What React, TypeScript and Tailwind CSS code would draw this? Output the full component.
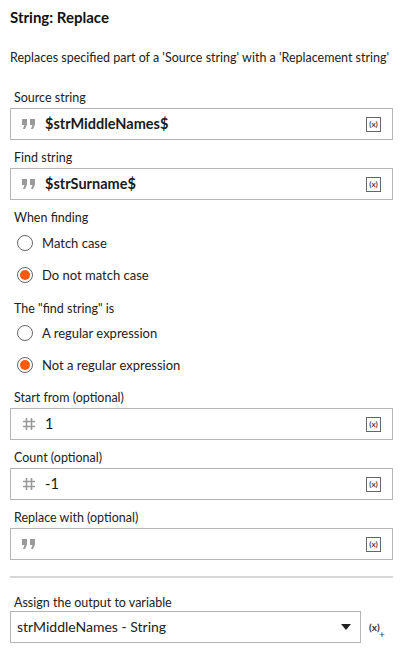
import React from 'react'

const font = { fontFamily: 'Lato, "Noto Sans", sans-serif' }

function QuoteIcon() {
  return (
    <svg width="14" height="10" viewBox="0 0 14 10" className="shrink-0">
      <path d="M0 0h5v5.5L3 10H1l1.5-4H0z M8 0h5v5.5L11 10H9l1.5-4H8z" fill="#9a9a9a" />
    </svg>
  )
}

function HashIcon() {
  return (
    <svg width="14" height="14" viewBox="0 0 14 14" className="shrink-0">
      <path d="M4.5 1v12M9.5 1v12M1 4.5h12M1 9.5h12" stroke="#9a9a9a" strokeWidth="1.6" fill="none" />
    </svg>
  )
}

function VarIcon() {
  return (
    <span className="flex h-[15px] w-[15px] items-center justify-center border border-[#666] text-[8px] font-bold leading-none text-[#444]">
      (x)
    </span>
  )
}

function Label({ children, className = '' }: { children: React.ReactNode; className?: string }) {
  return <div className={`px-1 text-[12.5px] leading-[14px] text-[#222] ${className}`}>{children}</div>
}

function Field({ label, icon, value, bold }: { label: string; icon: 'quote' | 'hash'; value?: string; bold?: boolean }) {
  return (
    <div className="flex flex-col">
      <Label className="pb-[3px]">{label}</Label>
      <div className="flex h-[32px] items-center border border-[#b5b5b5] pl-[11px] pr-[11px]">
        {icon === 'quote' ? <QuoteIcon /> : <HashIcon />}
        <span className={`ml-[9px] flex-1 text-[14.5px] leading-[18px] text-[#1a1a1a] ${bold ? 'font-bold' : ''}`}>{value}</span>
        <VarIcon />
      </div>
    </div>
  )
}

function Radio({ label, checked }: { label: string; checked?: boolean }) {
  return (
    <div className="flex h-[32px] items-center pl-[7px]">
      <span className="flex h-[16px] w-[16px] items-center justify-center rounded-full border border-[#666] bg-white">
        {checked && <span className="h-[10px] w-[10px] rounded-full bg-[#ff5a0a]" />}
      </span>
      <span className="ml-[9px] text-[13px] leading-[16px] text-[#222]">{label}</span>
    </div>
  )
}

export default function App() {
  return (
    <div className="min-h-screen w-[409px] bg-white px-[10px] pt-[8px]" style={font}>
      <h1 className="text-[15px] font-bold leading-[18px] text-[#111]">String: Replace</h1>
      <p className="mt-[24px] text-[12.5px] leading-[16px] text-[#222]">
        Replaces specified part of a 'Source string' with a 'Replacement string'
      </p>

      <div className="mt-[25px] flex w-[383px] flex-col gap-[11px]">
        <Field label="Source string" icon="quote" value="$strMiddleNames$" bold />
        <Field label="Find string" icon="quote" value="$strSurname$" bold />
      </div>

      <div className="mt-[11px] w-[383px]">
        <Label className="pb-[2px]">When finding</Label>
        <Radio label="Match case" />
        <Radio label="Do not match case" checked />
      </div>

      <div className="mt-[11px] w-[383px]">
        <Label className="pb-[1px]">The "find string" is</Label>
        <Radio label="A regular expression" />
        <Radio label="Not a regular expression" checked />
      </div>

      <div className="mt-[10px] flex w-[383px] flex-col gap-[11px]">
        <Field label="Start from (optional)" icon="hash" value="1" />
        <Field label="Count (optional)" icon="hash" value="-1" />
        <Field label="Replace with (optional)" icon="quote" />
      </div>

      <div className="mt-[16px] h-[2px] w-[383px] bg-[#d6d6d6]" />

      <div className="mt-[18px] flex flex-col">
        <Label className="pb-[1px]">Assign the output to variable</Label>
        <div className="flex items-center">
          <div className="flex h-[32px] w-[351px] items-center border border-[#b5b5b5] pl-[6px] pr-[9px]">
            <span className="flex-1 text-[14px] leading-[18px] text-[#222]">strMiddleNames - String</span>
            <svg width="10" height="6" viewBox="0 0 10 6">
              <path d="M0 0h10L5 6z" fill="#222" />
            </svg>
          </div>
          <span className="relative ml-[8px] text-[10px] font-bold leading-[12px] text-[#333]">
            (x)
            <span className="absolute -bottom-[6px] -right-[5px] text-[10px] font-normal leading-[10px]">+</span>
          </span>
        </div>
      </div>
    </div>
  )
}
